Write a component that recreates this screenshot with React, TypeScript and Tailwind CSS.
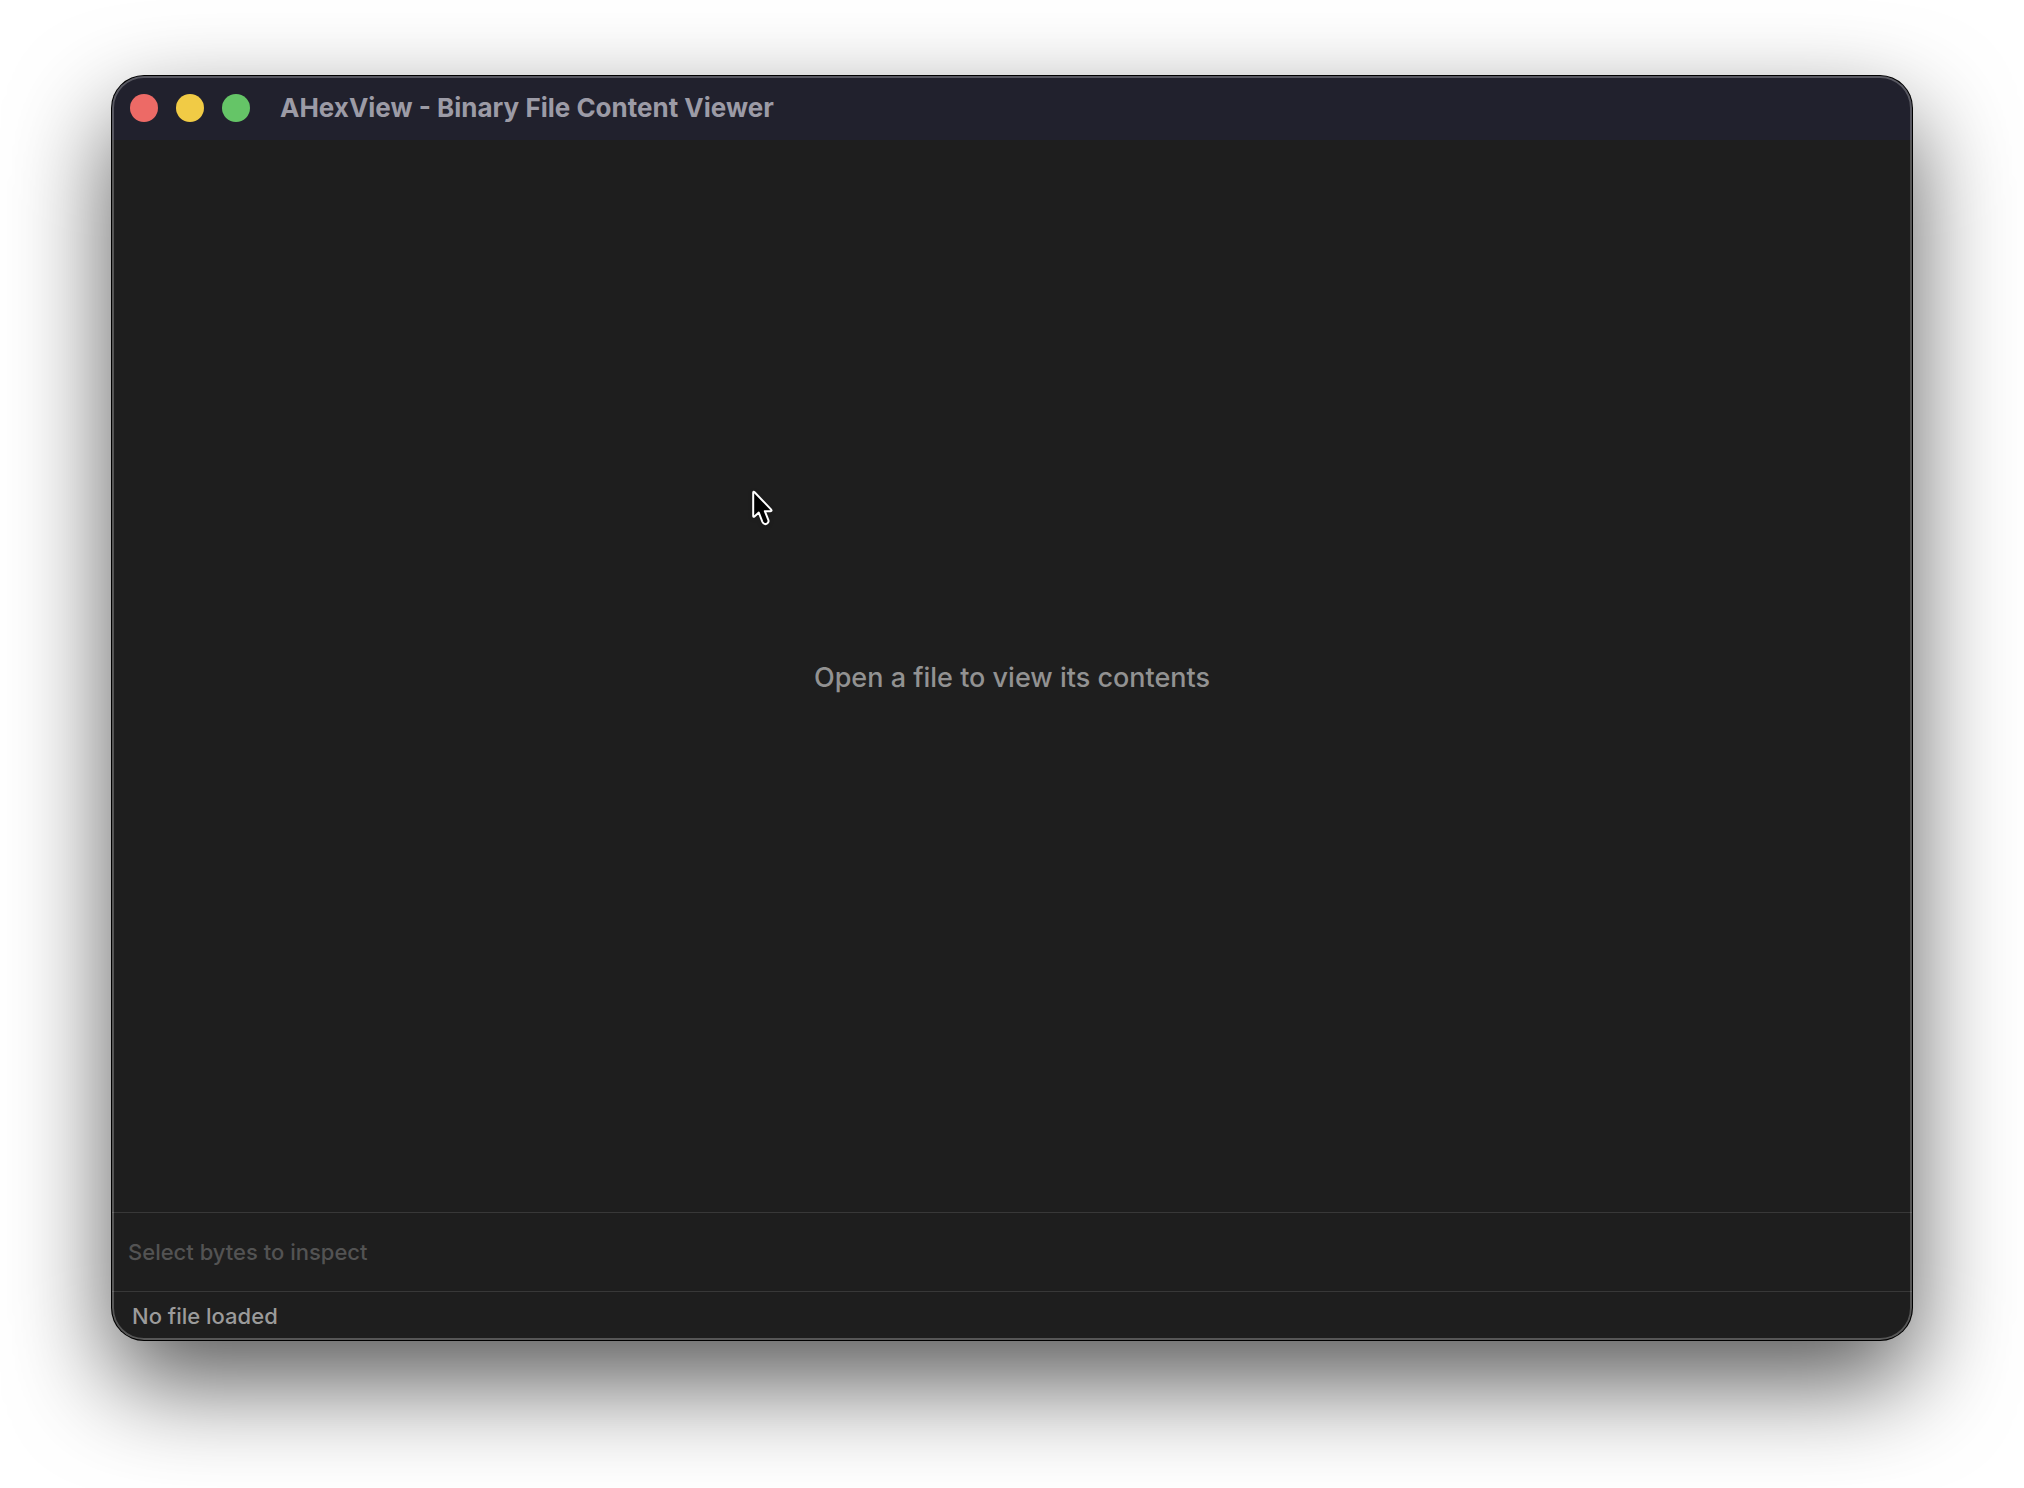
import React from "react";

const lights = [
  { label: "Close", color: "bg-[#ed6a66]" },
  { label: "Minimize", color: "bg-[#f1cb45]" },
  { label: "Zoom", color: "bg-[#65c567]" },
];

function TitleBar() {
  return (
    <header className="flex h-16 items-center bg-[#21212d] pl-[18px]">
      <div className="flex gap-[18px]">
        {lights.map((light) => (
          <button
            key={light.label}
            type="button"
            aria-label={light.label}
            className={`size-7 rounded-full ${light.color}`}
          />
        ))}
      </div>
      <h1 className="ml-[30px] text-[26px] leading-8 font-bold text-[#9c9ba6]">
        AHexView - Binary File Content Viewer
      </h1>
    </header>
  );
}

function Pointer() {
  return (
    <svg
      className="pointer-events-none absolute top-[346px] left-[636px] h-12 w-9 drop-shadow-sm"
      viewBox="0 0 36 48"
      aria-hidden="true"
    >
      <path
        d="M5.2 6.6 V29.8 Q5.2 31.4 6.5 30.4 L10.8 26.6 L14.4 35.8 Q15.8 38.9 18.6 37.9 Q21.3 36.6 20.3 33.8 L16.8 25.2 H22.4 Q24.4 25 23 23.4 L6.6 6.2 Q5.4 5.2 5.2 6.6 Z"
        fill="#000"
        stroke="#fff"
        strokeWidth="2"
        strokeLinejoin="round"
      />
    </svg>
  );
}

export default function App() {
  return (
    <div className="flex min-h-screen flex-col bg-white px-28 pt-[76px] pb-[148px] font-['Inter',sans-serif]">
      <div className="relative flex flex-1 flex-col overflow-hidden rounded-[32px] bg-[#1e1e1e] shadow-[0_0_0_1px_#000,0_42px_100px_rgba(0,0,0,0.66)]">
        <TitleBar />
        <main className="relative flex flex-1 items-center justify-center pt-1">
          <p className="text-[27px] leading-8 font-medium text-[#929292]">
            Open a file to view its contents
          </p>
          <Pointer />
        </main>
        <section className="flex h-[79px] items-center border-t border-[#383838] px-4">
          <p className="text-[22px] leading-7 font-medium text-[#535353]">
            Select bytes to inspect
          </p>
        </section>
        <footer className="flex h-[49px] items-center border-t border-[#383838] px-5">
          <p className="text-[22px] leading-7 font-medium text-[#9b9b9b]">
            No file loaded
          </p>
        </footer>
        {/* light rim drawn over the window content */}
        <div className="pointer-events-none absolute inset-0 rounded-[32px] border-2 border-white/25" />
      </div>
    </div>
  );
}
